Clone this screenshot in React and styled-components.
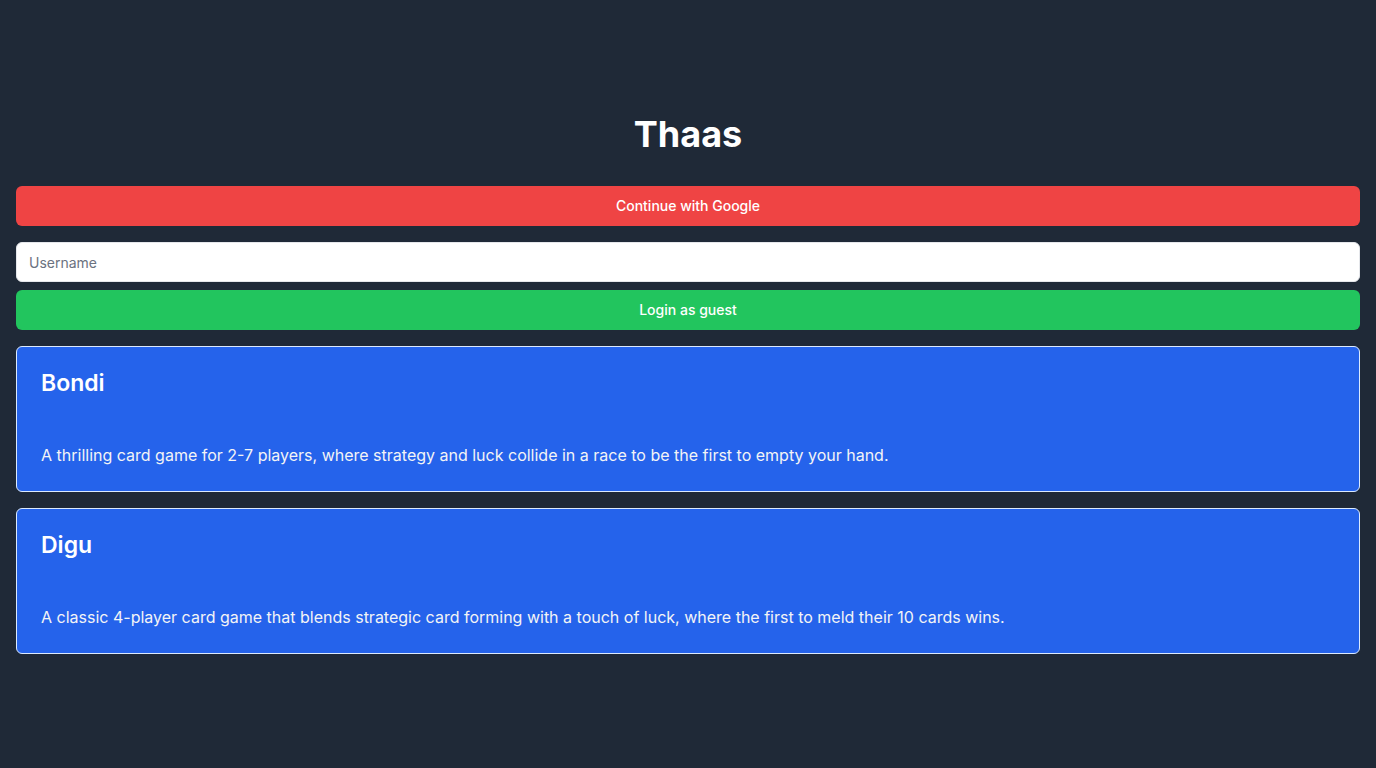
import React from "react";
import styled, { createGlobalStyle } from "styled-components";

const Global = createGlobalStyle`
  html, body { margin: 0; padding: 0; background: #1f2937; }
  body { font-family: Inter, "Noto Sans", sans-serif; color: #fff; }
  * { box-sizing: border-box; }
`;

const Page = styled.main`
  min-height: 768px;
  padding: 114px 16px 16px;
  display: flex;
  flex-direction: column;
`;

const Title = styled.h1`
  margin: 0 0 32px;
  font-size: 36px;
  line-height: 40px;
  font-weight: 700;
  text-align: center;
  color: #fff;
`;

const Button = styled.button`
  height: 40px;
  width: 100%;
  border: none;
  border-radius: 6px;
  background: ${(p) => p.$bg};
  color: #fff;
  font-family: inherit;
  font-size: 14px;
  line-height: 20px;
  font-weight: 500;
  padding: 0 0 1px;
  cursor: pointer;
`;

const GuestForm = styled.div`
  margin-top: 16px;
  display: flex;
  flex-direction: column;
  gap: 8px;
`;

const Input = styled.input`
  height: 40px;
  width: 100%;
  border: 1px solid #e5e7eb;
  border-radius: 6px;
  background: #fff;
  padding: 0 12px;
  font-family: inherit;
  font-size: 14px;
  color: #111827;
  &::placeholder { color: #6b7280; }
  outline: none;
`;

const Games = styled.div`
  margin-top: 16px;
  display: flex;
  flex-direction: column;
  gap: 16px;
`;

const Card = styled.div`
  background: #2563eb;
  border: 1px solid #dbeafe;
  border-radius: 6px;
  padding: 24px;
`;

const CardTitle = styled.h2`
  margin: 0 0 48px;
  font-size: 23px;
  line-height: 24px;
  font-weight: 600;
  color: #fff;
`;

const CardText = styled.p`
  margin: 0;
  font-size: 16px;
  line-height: 24px;
  color: #f3f4f6;
`;

const games = [
  {
    name: "Bondi",
    desc: "A thrilling card game for 2-7 players, where strategy and luck collide in a race to be the first to empty your hand.",
  },
  {
    name: "Digu",
    desc: "A classic 4-player card game that blends strategic card forming with a touch of luck, where the first to meld their 10 cards wins.",
  },
];

export default function App() {
  return (
    <>
      <Global />
      <Page>
        <Title>Thaas</Title>
        <Button $bg="#ef4444">Continue with Google</Button>
        <GuestForm>
          <Input placeholder="Username" />
          <Button $bg="#22c55e">Login as guest</Button>
        </GuestForm>
        <Games>
          {games.map((g) => (
            <Card key={g.name}>
              <CardTitle>{g.name}</CardTitle>
              <CardText>{g.desc}</CardText>
            </Card>
          ))}
        </Games>
      </Page>
    </>
  );
}
